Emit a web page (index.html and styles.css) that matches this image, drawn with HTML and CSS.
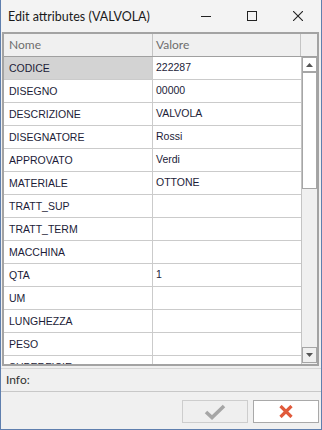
FILE: index.html
```html
<!DOCTYPE html>
<html lang="it">
  <head>
    <meta charset="UTF-8" />
    <title>Edit attributes (VALVOLA)</title>
    <link rel="stylesheet" href="styles.css">
  </head>
  <body>
    <div class="window">
      <!-- Title bar -->
      <div class="titlebar">
        <span class="title">Edit attributes (VALVOLA)</span>
        <div class="controls">
          <span class="ctl">
            <svg width="10" height="10" viewBox="0 0 10 10"><path d="M0 5.5h10" stroke="#222" stroke-width="1"/></svg>
          </span>
          <span class="ctl">
            <svg width="10" height="10" viewBox="0 0 10 10"><rect x="0.5" y="0.5" width="9" height="9" fill="none" stroke="#222"/></svg>
          </span>
          <span class="ctl">
            <svg width="10" height="10" viewBox="0 0 10 10"><path d="M0 0L10 10M10 0L0 10" stroke="#222" stroke-width="1.1"/></svg>
          </span>
        </div>
      </div>

      <!-- Attribute grid -->
      <div class="grid">
        <div class="grid-head">
          <div class="hcell name">Nome</div>
          <div class="hcell value">Valore</div>
          <div class="hcell corner"></div>
        </div>
        <div class="grid-body">
          <div class="rows">
            <div class="row selected"><div class="cell name">CODICE</div><div class="cell value">222287</div></div>
            <div class="row"><div class="cell name">DISEGNO</div><div class="cell value">00000</div></div>
            <div class="row"><div class="cell name">DESCRIZIONE</div><div class="cell value">VALVOLA</div></div>
            <div class="row"><div class="cell name">DISEGNATORE</div><div class="cell value">Rossi</div></div>
            <div class="row"><div class="cell name">APPROVATO</div><div class="cell value">Verdi</div></div>
            <div class="row"><div class="cell name">MATERIALE</div><div class="cell value">OTTONE</div></div>
            <div class="row"><div class="cell name">TRATT_SUP</div><div class="cell value"></div></div>
            <div class="row"><div class="cell name">TRATT_TERM</div><div class="cell value"></div></div>
            <div class="row"><div class="cell name">MACCHINA</div><div class="cell value"></div></div>
            <div class="row"><div class="cell name">QTA</div><div class="cell value">1</div></div>
            <div class="row"><div class="cell name">UM</div><div class="cell value"></div></div>
            <div class="row"><div class="cell name">LUNGHEZZA</div><div class="cell value"></div></div>
            <div class="row"><div class="cell name">PESO</div><div class="cell value"></div></div>
            <div class="row"><div class="cell name">SUPERFICIE</div><div class="cell value"></div></div>
          </div>
          <div class="scrollbar">
            <div class="sb-btn up">
              <svg width="7" height="4" viewBox="0 0 7 4"><path d="M3.5 0L7 4H0z" fill="#555"/></svg>
            </div>
            <div class="sb-thumb"></div>
            <div class="sb-track"></div>
            <div class="sb-btn down">
              <svg width="7" height="4" viewBox="0 0 7 4"><path d="M0 0H7L3.5 4z" fill="#555"/></svg>
            </div>
          </div>
        </div>
      </div>

      <!-- Info -->
      <div class="info">Info:</div>

      <!-- Buttons -->
      <div class="actions">
        <button class="btn ok" disabled>
          <svg width="22" height="16" viewBox="0 0 22 16"><path d="M2 8l6 5.5L20 2" fill="none" stroke="#a6a6a6" stroke-width="3.6"/></svg>
        </button>
        <button class="btn cancel">
          <svg width="14" height="13" viewBox="0 0 14 13"><path d="M1.5 1l11 11M12.5 1l-11 11" stroke="#e05a3b" stroke-width="3.2"/></svg>
        </button>
      </div>
    </div>
  </body>
</html>
```

FILE: styles.css
```css
body {
  margin: 0;
  width: 322px;
  height: 430px;
  overflow: hidden;
  font-family: 'Liberation Sans', Arial, sans-serif;
  background: #f0f0f0;
}

.window {
  box-sizing: border-box;
  width: 322px;
  height: 430px;
  display: flex;
  flex-direction: column;
  background: #f0f0f0;
  border: 1px solid #5f7fae;
  border-top: none;
}

.titlebar {
  height: 32px;
  display: flex;
  align-items: center;
  justify-content: space-between;
  background: #f3f3f3;
}

.title {
  padding-left: 7px;
  font-family: Lato, 'Noto Sans', sans-serif;
  font-size: 12.5px;
  color: #1a1a1a;
}

.controls {
  display: flex;
}

.ctl {
  width: 46px;
  height: 32px;
  display: flex;
  align-items: center;
  justify-content: center;
}

.grid {
  margin: 0 2px 0 1px;
  border: 2px solid #a3a3a3;
  background: #fff;
  display: flex;
  flex-direction: column;
  height: 334px;
  box-sizing: border-box;
}

.grid-head {
  display: flex;
  height: 23px;
  box-sizing: border-box;
  background: #f0f0f0;
  border-bottom: 1px solid #a0a0a0;
}

.hcell {
  box-sizing: border-box;
  font-family: Lato, 'Noto Sans', sans-serif;
  font-size: 12px;
  color: #6d6d6d;
  line-height: 22px;
  padding-left: 5px;
  border-right: 1px solid #c4c4c4;
}

.hcell.name {
  width: 149px;
}

.hcell.value {
  flex: 1;
  padding-left: 3px;
}

.hcell.corner {
  width: 16px;
  border-right: none;
}

.grid-body {
  flex: 1;
  display: flex;
  overflow: hidden;
}

.rows {
  flex: 1;
  overflow: hidden;
}

.row {
  display: flex;
  height: 23px;
  box-sizing: border-box;
  border-bottom: 1px solid #cbcbcb;
  font-size: 10.5px;
  color: #1c1c38;
}

.cell {
  box-sizing: border-box;
}

.cell.name {
  width: 149px;
  padding-left: 5px;
  line-height: 22px;
  border-right: 1px solid #cbcbcb;
}

.cell.value {
  flex: 1;
  padding: 4px 0 0 3px;
}

.row.selected .cell.name {
  background: #d3d3d3;
}

.scrollbar {
  width: 16px;
  box-sizing: border-box;
  border-left: 1px solid #c4c4c4;
  background: #f0f0f0;
  display: flex;
  flex-direction: column;
}

.sb-btn {
  height: 16px;
  box-sizing: border-box;
  border: 1px solid #a6a6a6;
  background: #fff;
  display: flex;
  align-items: center;
  justify-content: center;
}

.sb-btn.up {
  border-bottom-width: 2px;
}

.sb-thumb {
  height: 116px;
  box-sizing: border-box;
  border: 1px solid #a6a6a6;
  border-top: none;
  background: #fff;
}

.sb-track {
  flex: 1;
}

.sb-btn.down {
  background: #f0f0f0;
  margin-bottom: 1px;
}

.info {
  height: 24px;
  margin-top: 2px;
  border-top: 1px solid #d6d6d6;
  border-bottom: 1px solid #c8c8c8;
  box-sizing: border-box;
  padding-left: 5px;
  line-height: 22px;
  font-family: Lato, 'Noto Sans', sans-serif;
  font-size: 12px;
  color: #333;
}

.actions {
  display: flex;
  justify-content: flex-end;
  gap: 5px;
  padding: 8px 2px 0 0;
}

.btn {
  width: 66px;
  height: 23px;
  margin: 0;
  padding: 0;
  display: flex;
  align-items: center;
  justify-content: center;
  box-sizing: border-box;
}

.btn.ok {
  background: #efefef;
  border: 1px solid #cdcdcd;
}

.btn.cancel {
  background: #fff;
  border: 1px solid #a9a9a9;
}
```
